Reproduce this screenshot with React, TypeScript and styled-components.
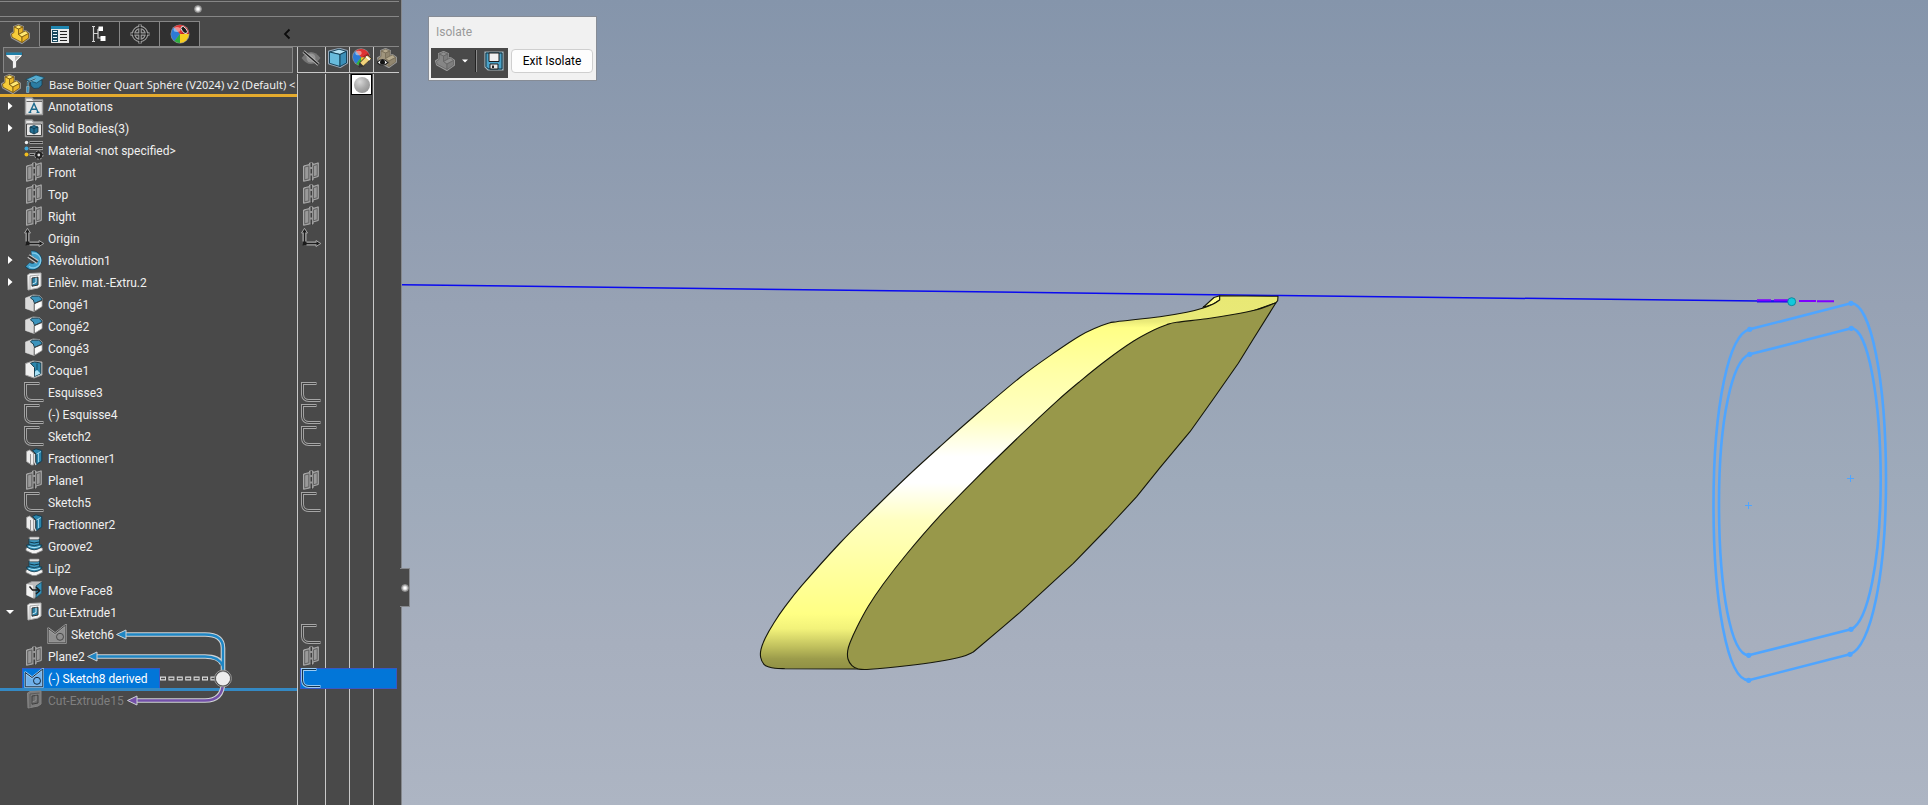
import React from "react";
import styled, { createGlobalStyle, css } from "styled-components";

const GlobalStyle = createGlobalStyle`
  *, *::before, *::after { box-sizing: border-box; }
  body { margin: 0; background: #494949; }
  button, input { font: inherit; color: inherit; margin: 0; padding: 0; border: 0; background: none; }
`;

const LINE = "#868686";
const COLUMN_LINE = "#c9c9c9";

/* ---------- layout ---------- */

const Page = styled.div`
  display: flex;
  min-height: 100vh;
  font-family: Roboto, "Noto Sans", sans-serif;
  font-size: 12px;
  line-height: 22px;
  color: #f0f0f0;
`;

const Panel = styled.aside`
  position: relative;
  flex: none;
  display: flex;
  flex-direction: column;
  width: 402px;
  padding: 1px 2px 0 0;
  background: #494949;
  border-right: 1px solid #85888d;
`;

const Grip = styled.div`
  display: flex;
  align-items: center;
  justify-content: center;
  height: 16px;
  margin-bottom: 4px;
  padding-right: 4px;
  border: solid ${LINE};
  border-width: 1px 0;
`;

const Knob = styled.span`
  width: 8px;
  height: 8px;
  border-radius: 50%;
  border: 1px solid #8f8f8f;
  background: radial-gradient(#ffffff 20%, #9c9c9c 80%);
`;

const Tabs = styled.nav`
  display: flex;
  height: 26px;
`;

const Tab = styled.button<{ $active?: boolean }>`
  display: grid;
  place-items: center;
  width: 40px;
  border-top: 1px solid ${LINE};
  border-right: 1px solid ${LINE};
  border-bottom: 1px solid ${(p) => (p.$active ? "transparent" : LINE)};
  background: ${(p) => (p.$active ? "transparent" : "#303030")};
`;

const TabsRest = styled.div`
  flex: 1;
  display: flex;
  align-items: center;
  padding-left: 81px;
  border-bottom: 1px solid ${LINE};
`;

const Collapse = styled.button`
  display: grid;
  place-items: center;
  width: 12px;
  height: 16px;
`;

const HeaderRow = styled.div`
  display: flex;
  height: 27px;
`;

const FilterCell = styled.div`
  width: 297px;
  padding: 0 4px 1px 3px;
`;

const FilterBox = styled.label`
  display: flex;
  align-items: center;
  gap: 4px;
  height: 26px;
  padding: 0 4px 0 0;
  border: 1px solid ${LINE};
  background: #575757;
`;

const FilterInput = styled.input`
  flex: 1;
  min-width: 0;
  outline: none;
`;

const Tree = styled.ul`
  list-style: none;
  margin: 0;
  padding: 0;
`;

const bar = (color: string) => css`
  &::after {
    content: "";
    position: absolute;
    left: 0;
    right: 0;
    bottom: -1px;
    height: 3px;
    background: ${color};
  }
`;

const Row = styled.li`
  position: relative;
  display: flex;
  height: 22px;
`;

const TreeCell = styled.div<{ $bar?: string }>`
  position: relative;
  display: flex;
  width: 297px;
  white-space: nowrap;
  ${(p) => p.$bar && bar(p.$bar)}
`;

const RootCell = styled(TreeCell)`
  gap: 4px;
  padding-left: 1px;
`;

const RootName = styled.span`
  flex: 1;
  font-family: "Noto Sans", sans-serif;
  font-size: 11px;
`;

const Expander = styled.button<{ $child?: boolean }>`
  flex: none;
  display: flex;
  align-items: center;
  width: ${(p) => (p.$child ? 45 : 22)}px;
  height: 20px;
  padding-left: 6px;
`;

const Indent = styled(Expander).attrs({ as: "span" })``;

const Item = styled.span<{ $selected?: boolean; $dim?: boolean }>`
  display: flex;
  gap: 4px;
  height: 21px;
  padding: 0 12px 0 2px;
  color: ${(p) => (p.$dim ? "#7f7f7f" : "inherit")};
  ${(p) =>
    p.$selected &&
    css`
      background: #0276d8;
      color: #ffffff;
      box-shadow: inset 0 0 0 1px #3758c4;
    `}
`;

const Pane = styled.div<{ $selected?: boolean }>`
  position: relative;
  flex: 1;
  display: flex;
  ${(p) =>
    p.$selected &&
    css`
      &::before {
        content: "";
        position: absolute;
        inset: 0 2px 1px 3px;
        background: #0276d8;
        border: 1px solid #3758c4;
      }
    `}
`;

const PaneCell = styled.div<{ $width?: number; $header?: boolean }>`
  display: flex;
  align-items: flex-start;
  justify-content: ${(p) => (p.$width === 28 ? "flex-start" : "center")};
  padding-left: ${(p) => (p.$width === 28 ? 3 : 0)}px;
  ${(p) => (p.$width ? `width: ${p.$width}px;` : "flex: 1;")}
  border-left: 1px solid ${COLUMN_LINE};
  svg {
    position: relative;
  }
  ${(p) =>
    p.$header &&
    css`
      height: 26px;
      padding-top: 1px;
      border-bottom: 1px solid ${COLUMN_LINE};
    `}
`;

const Swatch = styled.button`
  display: grid;
  place-items: center;
  width: 21px;
  height: 21px;
  background: #ffffff;
  border: 1px solid #000000;
`;

const Sphere = styled.span`
  width: 16px;
  height: 16px;
  border-radius: 50%;
  background: radial-gradient(circle at 36% 30%, #d8d8d8 0%, #ababab 45%, #858585 100%);
`;

const Filler = styled.div`
  flex: 1;
  display: flex;
  padding-left: 297px;
`;

const Relations = styled.svg`
  position: absolute;
  left: 80px;
  top: 0;
  z-index: 2;
  pointer-events: none;
`;

const SplitHandle = styled.button`
  position: absolute;
  left: 400px;
  top: 568px;
  z-index: 3;
  display: grid;
  place-items: center;
  width: 10px;
  height: 39px;
  background: #494949;
  border: solid #85888d;
  border-width: 1px 1px 1px 0;
`;

const Viewport = styled.main`
  position: relative;
  flex: 1;
  min-width: 0;
  background: linear-gradient(#8595ab 0%, #97a2b4 38%, #9eaaba 60%, #a7afbe 80%, #adb5c3 100%);
`;

const Scene = styled.svg`
  position: absolute;
  inset: 0;
  width: 100%;
  height: 100%;
`;

const Dialog = styled.section`
  position: absolute;
  left: 26px;
  top: 16px;
  width: 169px;
  height: 65px;
  padding: 0 2px;
  border: 1px solid #868c96;
  background: #f1f1f1;
`;

const DialogTitle = styled.h2`
  margin: 0;
  padding: 0 5px;
  font-size: 12px;
  font-weight: 400;
  line-height: 31px;
  color: #9a9a9a;
`;

const DialogBody = styled.div`
  display: flex;
  gap: 3px;
`;

const DarkTools = styled.div`
  display: flex;
  align-items: flex-start;
  width: 77px;
  height: 30px;
  padding: 2px 4px;
  background: #494949;
`;

const ToolButton = styled.button`
  display: flex;
  align-items: center;
  gap: 7px;
  height: 22px;
`;

const Divider = styled.span`
  width: 2px;
  height: 22px;
  margin: 0 7px;
  background: #8a8a8a;
  border-left: 1px solid #222222;
`;

const ExitButton = styled.button`
  width: 82px;
  height: 24px;
  margin-top: 1px;
  background: #fdfdfd;
  border: 1px solid #cfcfcf;
  border-radius: 4px;
  line-height: 22px;
  color: #000000;
`;

/* ---------- icons ---------- */

const Svg = ({ children }: { children: React.ReactNode }) => (
  <svg width="20" height="20" viewBox="0 0 20 20" style={{ flex: "none" }} aria-hidden="true">
    {children}
  </svg>
);

const PartShape = ({ top, side, front, edge }: { top: string; side: string; front: string; edge: string }) => (
  <g strokeLinejoin="round">
    <path d="M4 3 8.500 1 13 3V8L15.500 7 19 9.500V14L12 19 2 13.500 1 10 4 8Z" fill={front} stroke="#9a9a9a" strokeWidth="2" />
    <g stroke={edge} strokeWidth=".8">
      <path d="M4 3 8.500 1.200 13 3 8.500 5Z" fill={top} />
      <path d="M8.500 5 13 3V8L8.500 10.500Z" fill={side} />
      <path d="M4 3 8.500 5V10.500L12 13V18.500L2 13.200 1.500 10 4 8.500Z" fill={front} />
      <path d="M8.500 10.500 13 8 15.500 7 18.600 9.500 12 13Z" fill={top} />
      <path d="M12 13 18.600 9.500V14L12 18.500Z" fill={side} />
    </g>
  </g>
);

const PartIcon = () => (
  <Svg>
    <PartShape top="#ffe873" side="#eab528" front="#f7cc3a" edge="#7a570e" />
  </Svg>
);

const GrayPartIcon = () => (
  <Svg>
    <PartShape top="#8f8f8f" side="#7d7d7d" front="#868686" edge="#666666" />
  </Svg>
);

const PropertyIcon = () => (
  <Svg>
    <path d="M1 2H19V19H1Z" fill="#e9e9e9" />
    <path d="M1 2H19V5H1Z" fill="#1f86b0" />
    <path d="M2 6H8V18H2Z" fill="#16465c" />
    <path d="M3 7.500H7M3 10.500H7M3 13.500H7M3 16.500H7" stroke="#e9f6fb" strokeWidth="1" />
    <path d="M10 7.500H17M10 10.500H17M10 13.500H17M10 16.500H17" stroke="#222" strokeWidth="1.200" />
  </Svg>
);

const ConfigIcon = () => (
  <Svg>
    <path d="M2 2.500H5M2 17.500H5" stroke="#dcdcdc" strokeWidth="1.200" />
    <path d="M3.500 2V18M4 9.500H8M8 5V14H11M8 5H10" fill="none" stroke="#d0d0d0" strokeWidth="1.200" />
    <path d="M8.500 2.500H13V7H8.500Z" fill="#fff" />
    <path d="M10.500 12H15.500V17H10.500Z" fill="#fff" />
  </Svg>
);

const TargetIcon = () => (
  <Svg>
    <g fill="none" stroke="#9c9c9c" strokeWidth="3.600">
      <circle cx="10" cy="10" r="6.500" />
      <path d="M10 .500V19.500M.500 10H19.500" />
    </g>
    <g fill="none" stroke="#1d1d1d" strokeWidth="1.200">
      <circle cx="10" cy="10" r="6.500" />
      <path d="M10 1V19M1 10H19" />
    </g>
  </Svg>
);

const BallShape = () => (
  <g>
    <path d="M10 10 4 3.300A9 9 0 0 0 4.500 17Z" fill="#2d7ad6" />
    <path d="M10 10 4 3.300A9 9 0 0 1 17.500 5Z" fill="#e03232" />
    <path d="M10 10 4.500 17A9 9 0 0 0 10 19Z" fill="#2fae3d" />
    <path d="M10 10V19A9 9 0 0 0 18.900 10Z" fill="#f6cd1f" />
    <path d="M10 10 17.500 5A9 9 0 0 1 18.900 10Z" fill="#c41f1f" />
    <ellipse cx="7" cy="5.500" rx="3.500" ry="2.500" fill="#fff" opacity=".45" />
  </g>
);

const AppearanceIcon = () => (
  <Svg>
    <circle cx="10" cy="10" r="9.500" fill="#8f8f8f" />
    <BallShape />
    <ellipse cx="14.200" cy="6" rx="2.200" ry="4.200" transform="rotate(-40 14.200 6)" fill="#1a1a1a" stroke="#ececec" strokeWidth=".9" />
  </Svg>
);

const AppearanceEditIcon = () => (
  <Svg>
    <circle cx="9" cy="9" r="8.800" fill="#8f8f8f" />
    <g transform="scale(.92)">
      <BallShape />
    </g>
    <path d="M7 19 8 14.500 15.500 7 19.500 10.500 11.500 18Z" fill="#f2d27a" stroke="#222" strokeWidth=".9" />
    <path d="M14 8.500 18 12" stroke="#fff" strokeWidth="1.600" />
    <path d="M7 19 8 14.500 11.500 18Z" fill="#333" />
  </Svg>
);

const FunnelIcon = () => (
  <Svg>
    <path d="M2 2.500H18V6L12.500 11.500V17.500L8.500 19V11.500L2 6Z" fill="#f2f2f2" stroke="#3a3a3a" strokeWidth=".6" />
    <path d="M2 2.500H18V5H2Z" fill="#1f7fa8" />
    <path d="M11 11 15.500 6.500V6H11Z" fill="#bdbdbd" />
  </Svg>
);

const HideIcon = () => (
  <Svg>
    <path d="M.500 10Q5 4 10 4T19.500 10Q15 16 10 16T.500 10Z" fill="#757575" />
    <circle cx="10" cy="10" r="4.500" fill="#969696" />
    <path d="M2.500 3.500 17.500 16.500" stroke="#b4b4b4" strokeWidth="3" />
    <path d="M2.500 3.500 17.500 16.500" stroke="#222" strokeWidth="1.400" />
  </Svg>
);

const CubeIcon = () => (
  <Svg>
    <g stroke="#0e3a50" strokeWidth=".9" strokeLinejoin="round">
      <path d="M1 3.500 11.500.800 19 3V15L12.500 19 1 15.500Z" fill="#58aed2" stroke="#99aabb" strokeWidth="2" />
      <path d="M1.500 4 11 1.200 18.500 3.300 12 6.500Z" fill="#b3e1f2" />
      <path d="M1.500 4 12 6.500V18.500L1.500 15.300Z" fill="#68bbdc" />
      <path d="M12 6.500 18.500 3.300V15L12 18.500Z" fill="#3a8fb8" />
    </g>
  </Svg>
);

const PartEyeIcon = () => (
  <Svg>
    <PartShape top="#b5a98d" side="#91866f" front="#a0957d" edge="#776d58" />
    <path d="M0 14.500Q5.500 8.500 11 14.500 5.500 20 0 14.500Z" fill="#f5f5f5" stroke="#222" strokeWidth="1.100" />
    <circle cx="5.500" cy="14.300" r="2.500" fill="#111" />
  </Svg>
);

const CapIcon = () => (
  <Svg>
    <g strokeLinejoin="round">
      <path d="M5 7 17 6V11Q14 15.500 9 14.500L6 12Z" fill="#2b7da3" stroke="#1b3c4c" strokeWidth=".8" />
      <path d="M.800 5.500 11 1 19.600 3.700 11.500 9Z" fill="#54acd1" stroke="#1b4a60" strokeWidth=".8" />
      <path d="M10.500 4.800 2.800 8V14" fill="none" stroke="#a9bcc5" strokeWidth="1.800" />
      <path d="M10.500 4.800 2.800 8V14" fill="none" stroke="#1c5c7a" strokeWidth="1" />
      <path d="M1.500 12.500H4.200L3.800 18.500H1.500Z" fill="#3c94bd" stroke="#a9bcc5" strokeWidth=".6" />
    </g>
  </Svg>
);

const FolderBase = () => (
  <path d="M1.500 18.500V2H8L9.500 4H18.500V18.500Z" fill="#e6e6e6" stroke="#9d9d9d" strokeWidth="1.400" strokeLinejoin="round" />
);

const AnnotationsIcon = () => (
  <Svg>
    <FolderBase />
    <path d="M2.500 5.500H18" stroke="#666" strokeWidth="1" />
    <path d="M6 16 10 7.500 14 16M7.500 13.200H12.700M4.500 16.400H7.300M12.500 16.400H15.500" fill="none" stroke="#1b6a8e" strokeWidth="1.400" />
  </Svg>
);

const BodiesIcon = () => (
  <Svg>
    <FolderBase />
    <path d="M2.500 6H17.500V17.500H2.500Z" fill="none" stroke="#444" strokeWidth="1" />
    <path d="M6 9 10 7.500 14 9V14L10 16 6 14Z" fill="#236f93" stroke="#0c3346" strokeWidth=".8" />
    <path d="M6 9 10 10.500 14 9M10 10.500V16" fill="none" stroke="#0c3346" strokeWidth=".8" />
  </Svg>
);

const MaterialIcon = () => (
  <Svg>
    <g fill="none">
      <path d="M5.500 2.500H19M5.500 8.500H19M5.500 14.500H12" stroke="#9d9d9d" strokeWidth="3" />
      <path d="M6 2.500H18.500M6 8.500H18.500M6 14.500H12" stroke="#262626" strokeWidth="1.200" />
    </g>
    <circle cx="2.500" cy="2.500" r="1.700" fill="#eee" />
    <circle cx="2.500" cy="8.500" r="2" fill="#3fa7d8" />
    <circle cx="2.500" cy="14.500" r="2" fill="#f0bd1e" />
    <circle cx="14.800" cy="15" r="4.200" fill="#222" stroke="#a5a5a5" strokeWidth="1" strokeDasharray="2 1.200" />
    <circle cx="14.800" cy="15" r="1.400" fill="#ddd" />
  </Svg>
);

const PlaneIcon = () => (
  <Svg>
    <g strokeLinejoin="round">
      <path d="M2.500 4 8.500 2.500V1H12V2.500L17.300.800V14.500L12 16V18L8.500 18 2.500 19.300Z" fill="#979797" stroke="#a8a8a8" strokeWidth="1" />
      <path d="M3.700 5 7.800 4V16.800L3.700 17.800ZM12.500 3.700 16.200 2.500V13.700L12.500 14.800Z" fill="#999999" stroke="#555555" strokeWidth=".8" />
      <path d="M10.200 1V5M10.200 7V11.500M10.200 13.500V19" stroke="#222" strokeWidth="1.100" />
    </g>
  </Svg>
);

const OriginIcon = () => (
  <Svg>
    <path d="M3.500 3V15.500H17" fill="none" stroke="#a8a8a8" strokeWidth="4" strokeLinejoin="round" />
    <path d="M3.500 .300 6.500 5H.500ZM19.800 15.500 15 12.500V18.500Z" fill="#1c1c1c" stroke="#a8a8a8" strokeWidth="1" />
    <path d="M3.500 3V15.500H17" fill="none" stroke="#1c1c1c" strokeWidth="1.400" />
    <path d="M1.500 13.500H5.500V17.500H1.500Z" fill="#1c1c1c" />
  </Svg>
);

const RevolveIcon = () => (
  <Svg>
    <g fill="none">
      <path d="M7.500 4A6.300 6.300 0 1 1 3.500 14.500" stroke="#14465e" strokeWidth="7" />
      <path d="M7.500 4A6.300 6.300 0 1 1 3.800 14.700" stroke="#3f9fca" strokeWidth="5.400" />
      <path d="M8 3.200A7.400 7.400 0 1 1 5 16.500" stroke="#86cbe8" strokeWidth="1.200" />
      <path d="M4.500 6 13.500 12" stroke="#c2c2c2" strokeWidth="4" />
      <path d="M4.500 6 13.500 12" stroke="#2c2c2c" strokeWidth="1.600" />
    </g>
  </Svg>
);

const CutIcon = ({ dim }: { dim?: boolean }) => (
  <Svg>
    <g strokeLinejoin="round">
      <path d="M3.500 3 6 1.500 17 1V14L14 16 4 18Z" fill={dim ? "#7b7b7b" : "#f4f4f4"} stroke={dim ? "#858585" : "#b0b0b0"} strokeWidth="1" />
      <path d="M6 4 15.500 3M6 4V17.500" fill="none" stroke={dim ? "#4c4c4c" : "#888888"} strokeWidth=".7" />
      <path d="M8 6 14 5.200V13L8 14.200Z" fill={dim ? "#6a6a6a" : "#2882a8"} stroke={dim ? "#404040" : "#333333"} strokeWidth="1" />
      <path d="M12 5.500V10.500L8.500 12" fill="none" stroke={dim ? "#8c8c8c" : "#cfe9f3"} strokeWidth="1" />
    </g>
  </Svg>
);

const FilletIcon = () => (
  <Svg>
    <g strokeLinejoin="round">
      <path d="M1.500 4 9 1 15 1.500 18 4V12.500L10 17.500 1.500 14.500Z" fill="#ececec" stroke="#a0a0a0" strokeWidth="1" />
      <path d="M1.500 4 7 2.200 9.500 7.500V17.300L1.500 14.500Z" fill="#dadada" />
      <path d="M8 2.200H14.500Q17.500 3 18 6L10.500 9.500Q10 5 6.500 4Z" fill="#3c94bd" stroke="#163e51" strokeWidth="1" />
      <path d="M10.200 9.500V17.300M10.200 9.500 18 6.500" stroke="#444" strokeWidth=".9" />
      <path d="M11 10.500 17.500 7.500V12.300L11 16.300Z" fill="#fafafa" />
    </g>
  </Svg>
);

const ShellIcon = () => (
  <Svg>
    <g strokeLinejoin="round">
      <path d="M1.500 3.500 9 1 18 2V15L10 18 1.500 15Z" fill="#efefef" stroke="#a0a0a0" strokeWidth="1" />
      <path d="M6.500 3.200 10.500 2 16.800 3V13.700L10.500 16.500V7.500Z" fill="#2b86ad" stroke="#173c4c" strokeWidth="1" />
      <path d="M11 11.500 13 10 16.500 13.500 10.800 16Z" fill="#a9e0f4" />
      <path d="M13 3.500V10" stroke="#124a63" strokeWidth="1" />
    </g>
  </Svg>
);

const SketchIcon = ({ inverted }: { inverted?: boolean }) => (
  <Svg>
    <path
      d="M15.500 1.500H1.500V12.500Q2 18.500 8 18.500H19.500"
      fill="none"
      stroke={inverted ? "#9ccbf2" : "#a6a6a6"}
      strokeWidth="3"
    />
    <path d="M15 1.500H1.500V12.500Q2 18.500 8 18.500H19" fill="none" stroke={inverted ? "#12324e" : "#3f3f3f"} strokeWidth="1.100" />
  </Svg>
);

const DerivedIcon = ({ selected }: { selected?: boolean }) => (
  <Svg>
    <g strokeLinejoin="round">
      <path
        d="M1.200 4.500 8 9.500 18.800 1V18.800H1.200Z"
        fill={selected ? "#6fb0ea" : "#8e8e8e"}
        stroke={selected ? "#a8d3f7" : "#a6a6a6"}
        strokeWidth="2.200"
      />
      <g fill="none" stroke={selected ? "#14283c" : "#484848"} strokeWidth="1">
        <path d="M1.200 4.500 8 9.500 18.800 1V18.800H1.200Z" />
        <circle cx="13" cy="12.800" r="3.500" />
      </g>
    </g>
  </Svg>
);

const SplitIcon = () => (
  <Svg>
    <g strokeLinejoin="round">
      <path d="M2.500 3.500 5.500 2 9.500 5V17L7.500 17 2.500 13.500Z" fill="#ececec" stroke="#9a9a9a" strokeWidth=".9" />
      <path d="M6.500 6V16" stroke="#888" strokeWidth=".9" />
      <path d="M8.500 2.500 12 .800 17.800 2.500V13L12 17V6Z" fill="#2a84ab" stroke="#153d50" strokeWidth="1" />
      <path d="M12.500 6 17 3.500M14.500 5V14" stroke="#8fcde6" strokeWidth="1" />
      <path d="M10.500 6V14L12 17" fill="none" stroke="#ddd" strokeWidth="1.200" />
    </g>
  </Svg>
);

const GrooveIcon = () => (
  <Svg>
    <path d="M2 12.500 5 10.500H15L18.500 12.500V14.500L12 17.500H8.500L2 14.500Z" fill="#f4f4f4" stroke="#8b8b8b" strokeWidth=".8" />
    <path d="M2.500 9Q10 7 18 9L17 11.500Q10 16 3.500 11.500Z" fill="#2a84ab" stroke="#123747" strokeWidth=".8" />
    <path d="M4.500 10.300Q10 13 16 10.300" fill="none" stroke="#a8e0f4" strokeWidth="1.200" />
    <path d="M5 2.500V8.500Q10 11 15.500 8.500V2.500Z" fill="#3b96be" stroke="#123747" strokeWidth=".8" />
    <path d="M4.500 2 6 .800H14.500L16 2 14 3.800H6.500Z" fill="#e0e0e0" stroke="#555" strokeWidth=".8" />
    <path d="M5.500 6Q10 8 15.200 6" fill="none" stroke="#123747" strokeWidth="1" />
  </Svg>
);

const MoveFaceIcon = () => (
  <Svg>
    <g strokeLinejoin="round">
      <path d="M2.500 4 8 1.500 17.500 1.500V13L10 18.500 2.500 15Z" fill="#bdbdbd" stroke="#8b8b8b" strokeWidth=".9" />
      <path d="M2.500 4 9 5.500V18L2.500 15Z" fill="#f2f2f2" />
      <path d="M12 6 17.800 2V13L12 18Z" fill="#3490ba" stroke="#194658" strokeWidth=".8" />
      <path d="M5.500 6.500 8.500 10H15M12 7 15.800 10.500 12 14" fill="none" stroke="#1c1c1c" strokeWidth="1.400" />
    </g>
  </Svg>
);

const SaveIcon = () => (
  <Svg>
    <path d="M1 1H19V19H4L1 16Z" fill="#3e94bb" stroke="#a6b4ba" strokeWidth="1.200" />
    <path d="M2 2H18V18H4.500L2 15.500Z" fill="#4ba3c9" stroke="#12303d" strokeWidth="1" />
    <path d="M5 2H15V10.500H5Z" fill="#f0f0f0" stroke="#1d1d1d" strokeWidth="1" />
    <path d="M6 13H14V18H6Z" fill="#e8e8e8" stroke="#1d1d1d" strokeWidth="1" />
    <path d="M8 14.500H10V17H8Z" fill="#222" />
  </Svg>
);

const ArrowRight = () => (
  <svg width="8" height="10" viewBox="0 0 8 10" aria-hidden="true">
    <path d="M2 1 6.500 5 2 9Z" fill="#fff" />
  </svg>
);

const ArrowDown = ({ small }: { small?: boolean }) => (
  <svg width={small ? 6 : 8} height={small ? 4 : 6} viewBox="0 0 8 5" aria-hidden="true">
    <path d="M0 .500H8L4 4.500Z" fill="#fff" />
  </svg>
);

/* ---------- model tree ---------- */

type PaneMark = "plane" | "origin" | "sketch";

interface Feature {
  name: string;
  icon: React.ReactNode;
  open?: boolean;
  pane?: PaneMark;
  child?: boolean;
  selected?: boolean;
  dim?: boolean;
  relations?: boolean;
}

const features: Feature[] = [
  { name: "Annotations", icon: <AnnotationsIcon />, open: false },
  { name: "Solid Bodies(3)", icon: <BodiesIcon />, open: false },
  { name: "Material <not specified>", icon: <MaterialIcon /> },
  { name: "Front", icon: <PlaneIcon />, pane: "plane" },
  { name: "Top", icon: <PlaneIcon />, pane: "plane" },
  { name: "Right", icon: <PlaneIcon />, pane: "plane" },
  { name: "Origin", icon: <OriginIcon />, pane: "origin" },
  { name: "Révolution1", icon: <RevolveIcon />, open: false },
  { name: "Enlèv. mat.-Extru.2", icon: <CutIcon />, open: false },
  { name: "Congé1", icon: <FilletIcon /> },
  { name: "Congé2", icon: <FilletIcon /> },
  { name: "Congé3", icon: <FilletIcon /> },
  { name: "Coque1", icon: <ShellIcon /> },
  { name: "Esquisse3", icon: <SketchIcon />, pane: "sketch" },
  { name: "(-) Esquisse4", icon: <SketchIcon />, pane: "sketch" },
  { name: "Sketch2", icon: <SketchIcon />, pane: "sketch" },
  { name: "Fractionner1", icon: <SplitIcon /> },
  { name: "Plane1", icon: <PlaneIcon />, pane: "plane" },
  { name: "Sketch5", icon: <SketchIcon />, pane: "sketch" },
  { name: "Fractionner2", icon: <SplitIcon /> },
  { name: "Groove2", icon: <GrooveIcon /> },
  { name: "Lip2", icon: <GrooveIcon /> },
  { name: "Move Face8", icon: <MoveFaceIcon /> },
  { name: "Cut-Extrude1", icon: <CutIcon />, open: true },
  { name: "Sketch6", icon: <DerivedIcon />, pane: "sketch", child: true, relations: true },
  { name: "Plane2", icon: <PlaneIcon />, pane: "plane" },
  { name: "(-) Sketch8 derived", icon: <DerivedIcon selected />, pane: "sketch", selected: true },
  { name: "Cut-Extrude15", icon: <CutIcon dim />, dim: true },
];

const paneIcon = (mark?: PaneMark, selected?: boolean) => {
  if (mark === "plane") return <PlaneIcon />;
  if (mark === "origin") return <OriginIcon />;
  if (mark === "sketch") return <SketchIcon inverted={selected} />;
  return null;
};

const PaneColumns = ({ first, third, selected }: { first?: React.ReactNode; third?: React.ReactNode; selected?: boolean }) => (
  <Pane $selected={selected}>
    <PaneCell $width={28}>{first}</PaneCell>
    <PaneCell $width={24} />
    <PaneCell $width={24}>{third}</PaneCell>
    <PaneCell />
  </Pane>
);

/* Parent (blue) and child (violet) links of the selected sketch. */
const RelationArrows = () => (
  <Relations width="160" height="92" viewBox="80 0 160 92" aria-hidden="true">
    <g fill="none" stroke="#cfd3d6" strokeWidth="4.600">
      <path d="M124 10.500H205Q223 10.500 223 24V48" />
      <path d="M95 32.500H205Q219 32.500 222 40" />
      <path d="M135 76.500H205Q223 76.500 223 58" />
    </g>
    <g fill="none" stroke="#1f86c4" strokeWidth="2.400">
      <path d="M122 10.500H205Q223 10.500 223 24V48" />
      <path d="M93 32.500H205Q219 32.500 223 42" />
    </g>
    <path d="M133 76.500H205Q223 76.500 223 58" fill="none" stroke="#7350a8" strokeWidth="2.400" />
    <g stroke="#cfd3d6" strokeWidth="1">
      <path d="M116.500 10.500 126 6V15Z" fill="#1f86c4" />
      <path d="M87.500 32.500 97 28V37Z" fill="#1f86c4" />
      <path d="M127.500 76.500 137 72V81Z" fill="#7350a8" />
    </g>
    <path d="M160 54.500H217" stroke="#dcdcdc" strokeWidth="4" strokeDasharray="6 2.400" />
    <path d="M161 54.500H217" stroke="#4a4a4a" strokeWidth="1.600" strokeDasharray="4 4.400" />
    <circle cx="223" cy="54.500" r="8.400" fill="#454545" stroke="#9a9a9a" strokeWidth="1" />
    <circle cx="223" cy="54.500" r="6.600" fill="#ececec" stroke="#ffffff" strokeWidth=".8" />
  </Relations>
);

/* ---------- 3D view ---------- */

type Point = [number, number];

/* Smooth curve through the points (Catmull-Rom as cubic segments). */
const smooth = (pts: Point[]) =>
  pts
    .slice(1)
    .map((p, i) => {
      const a = pts[Math.max(0, i - 1)];
      const b = pts[i];
      const d = pts[Math.min(pts.length - 1, i + 2)];
      const c1 = [b[0] + (p[0] - a[0]) / 6, b[1] + (p[1] - a[1]) / 6];
      const c2 = [p[0] - (d[0] - b[0]) / 6, p[1] - (d[1] - b[1]) / 6];
      return `C${c1.join(" ")} ${c2.join(" ")} ${p.join(" ")}`;
    })
    .join("");

const FACE_EDGE: Point[] = [
  [1276, 302.7], [1268, 306], [1256.7, 309.7], [1233, 314.5], [1206.7, 318.7], [1176.7, 322.3], [1166.7, 324.7],
  [1153.3, 330.3], [1133.3, 341.3], [1106.7, 360], [1080, 381.3], [1056.7, 401.3], [1020, 435.7], [973.3, 481.3],
  [940, 515.7], [906.7, 554], [883.3, 584], [868.3, 606.3], [856.7, 627.7], [850, 642.7], [847.7, 650.7],
  [848, 659], [852, 665.7], [858.3, 669], [870, 669.3], [906.7, 665.7], [936.7, 661.7], [961.7, 656.7], [973.3, 652],
];
const BAND_EDGE: Point[] = [
  [785, 668.7], [775, 668.3], [769, 667], [764, 664.3], [760.7, 657.5], [761, 649.3], [765.3, 638], [774, 622.7],
  [785, 606.7], [801.7, 585.7], [840, 543], [873.3, 509.5], [906.7, 477], [940, 446.5], [973.3, 417], [1020, 377.5],
  [1056.7, 351], [1080, 335.7], [1095, 328.3], [1108.3, 323.3], [1116.7, 321.7], [1160, 316.7], [1186.7, 312.3],
  [1203.3, 308], [1213.3, 304], [1219.7, 300],
];
const FACE = `M1276 302.700${smooth(FACE_EDGE)}L1003.300 626.700 1020 612.300 1073.300 563.300 1106.700 529 1136.700 496.700 1160 467.700 1190 431.700 1213.300 399 1238.300 363.300 1253.300 339Z`;
const BAND = `M858 669L785 668.700${smooth(BAND_EDGE)}L1219.700 295.700 1278 296.300 1277.700 300.700 1276 302.700 1200 330 900 600Z`;

const SKETCH_POINTS: Point[] = [
  [1749.7, 329.3], [1851, 303.3], [1749.7, 354.3], [1851.3, 328.3],
  [1850, 654.3], [1748.7, 680.3], [1851, 629.3], [1748.7, 655.3],
];

const ModelScene = () => (
  <Scene viewBox="402 0 1526 805" preserveAspectRatio="xMinYMin slice" role="img" aria-label="Quarter sphere housing body">
    <defs>
      <linearGradient id="band" gradientUnits="userSpaceOnUse" x1="0" y1="296" x2="0" y2="670">
        <stop offset="0" stopColor="#e8e874" />
        <stop offset=".067" stopColor="#e9e978" />
        <stop offset=".085" stopColor="#ffff86" />
        <stop offset=".2" stopColor="#ffffa6" />
        <stop offset=".33" stopColor="#ffffc4" />
        <stop offset=".43" stopColor="#ffffff" />
        <stop offset=".5" stopColor="#ffffff" />
        <stop offset=".6" stopColor="#ffffc0" />
        <stop offset=".73" stopColor="#ffffa0" />
        <stop offset=".85" stopColor="#ffff84" />
        <stop offset=".89" stopColor="#f2f27a" />
        <stop offset=".94" stopColor="#bebe5c" />
        <stop offset=".97" stopColor="#9c9c4b" />
        <stop offset="1" stopColor="#8f8f44" />
      </linearGradient>
    </defs>
    <path d="M402 284.800 1280 295.500 1793 301.500" fill="none" stroke="#0a0af0" strokeWidth="1.500" />
    <g stroke="#15160a" strokeWidth="1.100" strokeLinejoin="round">
      <path d="M1203 307.500 1214 297.500 1219.700 295.700V300L1213.300 304Z" fill="#ffff90" />
      <path d={BAND} fill="url(#band)" />
      <path d={FACE} fill="#98984a" />
    </g>
    <path d="M1757 301.500H1793" stroke="#1a10f0" strokeWidth="2.200" />
    <path d="M1757 300.300H1771M1774 300.300H1788M1799 301H1816M1817 301.300H1834" stroke="#7d00ff" strokeWidth="2" />
    <circle cx="1791.700" cy="301.700" r="4" fill="#12c8dc" stroke="#087f92" strokeWidth=".8" />
    <g fill="none" stroke="#4fa5ff" strokeWidth="2.600">
      <path d="M1749.700 329.300 1851 303.300C1871 303.300 1886 380 1886 480 1886 575 1871 646 1850 654.300L1748.700 680.300C1727 680.300 1713.500 600 1713.500 505 1713.500 405 1729 334 1749.700 329.300Z" />
      <path d="M1749.700 354.300 1851.300 328.300C1868 328.300 1880.700 400 1880.700 480 1880.700 560 1868 622 1851 629.300L1748.700 655.300C1731 655.300 1719 590 1719 503 1719 420 1732 360 1749.700 354.300Z" />
      <path d="M1745 505.500H1752M1748.500 502V509M1847 478.500H1854M1850.500 475V482" strokeWidth="1" />
    </g>
    <g fill="#4fa5ff">
      {SKETCH_POINTS.map(([x, y]) => (
        <circle key={`${x}-${y}`} cx={x} cy={y} r="2.600" />
      ))}
    </g>
  </Scene>
);

export default function App() {
  return (
    <Page>
      <GlobalStyle />
      <Panel>
        <Grip>
          <Knob />
        </Grip>
        <Tabs>
          <Tab $active aria-label="Feature tree">
            <PartIcon />
          </Tab>
          <Tab aria-label="Properties">
            <PropertyIcon />
          </Tab>
          <Tab aria-label="Configurations">
            <ConfigIcon />
          </Tab>
          <Tab aria-label="Dimensions">
            <TargetIcon />
          </Tab>
          <Tab aria-label="Appearances">
            <AppearanceIcon />
          </Tab>
          <TabsRest>
            <Collapse aria-label="Collapse display pane">
              <svg width="8" height="12" viewBox="0 0 8 12" aria-hidden="true">
                <path d="M6.500 1.500 2 6 6.500 10.500" fill="none" stroke="#0c0c0c" strokeWidth="1.800" />
              </svg>
            </Collapse>
          </TabsRest>
        </Tabs>
        <HeaderRow>
          <FilterCell>
            <FilterBox>
              <FunnelIcon />
              <FilterInput type="text" aria-label="Filter tree" />
            </FilterBox>
          </FilterCell>
          <Pane>
            <PaneCell $width={28} $header>
              <HideIcon />
            </PaneCell>
            <PaneCell $width={24} $header>
              <CubeIcon />
            </PaneCell>
            <PaneCell $width={24} $header>
              <AppearanceEditIcon />
            </PaneCell>
            <PaneCell $header>
              <PartEyeIcon />
            </PaneCell>
          </Pane>
        </HeaderRow>
        <Tree>
          <Row>
            <RootCell $bar="#e5ab2d">
              <PartIcon />
              <CapIcon />
              <RootName>Base Boitier Quart Sphére (V2024) v2 (Default) &lt;</RootName>
            </RootCell>
            <PaneColumns
              third={
                <Swatch aria-label="Part appearance">
                  <Sphere />
                </Swatch>
              }
            />
          </Row>
          {features.map((f) => (
            <Row key={f.name}>
              <TreeCell $bar={f.selected ? "#3489c4" : undefined}>
                {f.open === undefined ? (
                  <Indent $child={f.child} />
                ) : (
                  <Expander aria-label={`Toggle ${f.name}`} aria-expanded={f.open}>
                    {f.open ? <ArrowDown /> : <ArrowRight />}
                  </Expander>
                )}
                <Item $selected={f.selected} $dim={f.dim}>
                  {f.icon}
                  <span>{f.name}</span>
                </Item>
              </TreeCell>
              <PaneColumns first={paneIcon(f.pane, f.selected)} selected={f.selected} />
              {f.relations && <RelationArrows />}
            </Row>
          ))}
        </Tree>
        <Filler>
          <PaneColumns />
        </Filler>
        <SplitHandle aria-label="Resize panel">
          <Knob />
        </SplitHandle>
      </Panel>
      <Viewport>
        <ModelScene />
        <Dialog aria-label="Isolate">
          <DialogTitle>Isolate</DialogTitle>
          <DialogBody>
            <DarkTools>
              <ToolButton aria-label="Removed component visibility">
                <GrayPartIcon />
                <ArrowDown small />
              </ToolButton>
              <Divider />
              <ToolButton aria-label="Save as display state">
                <SaveIcon />
              </ToolButton>
            </DarkTools>
            <ExitButton>Exit Isolate</ExitButton>
          </DialogBody>
        </Dialog>
      </Viewport>
    </Page>
  );
}
